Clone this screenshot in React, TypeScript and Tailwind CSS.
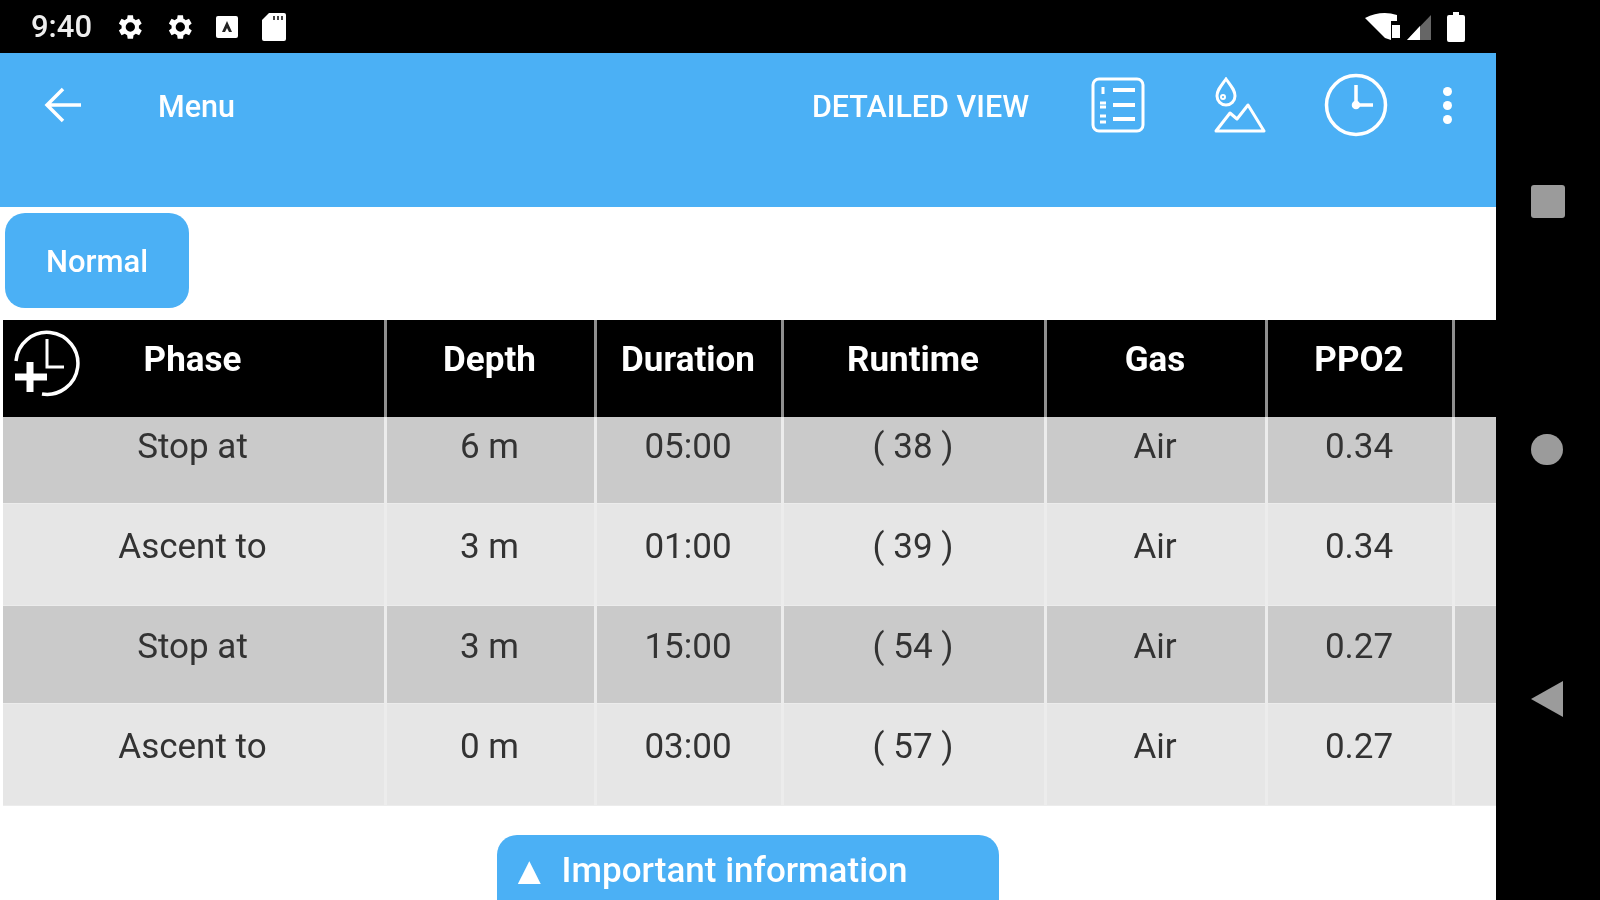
import React from "react";

const columns = [
  { label: "Phase", w: "w-[384px]" },
  { label: "Depth", w: "w-[210px]" },
  { label: "Duration", w: "w-[187px]" },
  { label: "Runtime", w: "w-[263px]" },
  { label: "Gas", w: "w-[221px]" },
  { label: "PPO2", w: "w-[187px]" },
];

const rows = [
  { cells: ["Stop at", "6 m", "05:00", "( 38 )", "Air", "0.34"], bg: "bg-[#cacaca]", h: "h-[87px]", pt: "pt-[6px]" },
  { cells: ["Ascent to", "3 m", "01:00", "( 39 )", "Air", "0.34"], bg: "bg-[#e6e6e6]", h: "h-[102px]", pt: "pt-[19px]" },
  { cells: ["Stop at", "3 m", "15:00", "( 54 )", "Air", "0.27"], bg: "bg-[#cacaca]", h: "h-[98px]", pt: "pt-[17px]" },
  { cells: ["Ascent to", "0 m", "03:00", "( 57 )", "Air", "0.27"], bg: "bg-[#e6e6e6]", h: "h-[102px]", pt: "pt-[19px]" },
];

function Gear() {
  return (
    <svg width="32" height="32" viewBox="0 0 24 24" fill="#fff">
      <path d="M19.4 13a7.5 7.5 0 0 0 0-2l2.1-1.6-2-3.5-2.5 1a7.5 7.5 0 0 0-1.7-1L15 3.2h-4l-.4 2.7a7.5 7.5 0 0 0-1.7 1l-2.5-1-2 3.5L6.5 11a7.5 7.5 0 0 0 0 2l-2.1 1.6 2 3.5 2.5-1a7.5 7.5 0 0 0 1.7 1l.4 2.7h4l.4-2.7a7.5 7.5 0 0 0 1.7-1l2.5 1 2-3.5zM13 15.5a3.5 3.5 0 1 1 0-7 3.5 3.5 0 0 1 0 7z" />
    </svg>
  );
}

function StatusBar() {
  return (
    <div className="h-[53px] shrink-0 bg-black flex items-center pl-[31px] pr-[31px] text-white">
      <span className="text-[31px] font-medium w-[82px] text-[#eeeeee] mt-[2px]">9:40</span>
      <div className="flex items-center gap-[18px]">
        <Gear />
        <Gear />
        <svg width="22" height="24" viewBox="0 0 22 24" className="ml-[3px]">
          <rect x="0" y="1" width="22" height="22" rx="2" fill="#fff" />
          <path d="M11 6l5 11h-3l-2-4-2 4H6z" fill="#222" />
        </svg>
        <svg width="24" height="28" viewBox="0 0 24 28" fill="#fff" className="ml-[6px]">
          <path d="M7 0h15a2 2 0 0 1 2 2v24a2 2 0 0 1-2 2H2a2 2 0 0 1-2-2V7z" />
          <path d="M11 3h2v4h-2zM15 3h2v4h-2zM19 3h2v4h-2z" fill="#444" />
        </svg>
      </div>
      <div className="ml-auto flex items-center">
        <svg width="66" height="30" viewBox="0 0 66 30">
          <path d="M0 6 Q16 -2 32 3 L32 9 L26 9 L26 28 L20 26 Z" fill="#fff" />
          <rect x="27" y="13" width="8" height="13" fill="#fff" />
          <path d="M42 28 L66 3 V28 Z" fill="#666" />
          <path d="M42 28 L55 14 V28 Z" fill="#fff" />
        </svg>
        <svg width="18" height="30" viewBox="0 0 18 30" className="ml-[16px]">
          <path d="M6 0h6v3h4a2 2 0 0 1 2 2v23a2 2 0 0 1-2 2H2a2 2 0 0 1-2-2V5a2 2 0 0 1 2-2h4z" fill="#fff" />
        </svg>
      </div>
    </div>
  );
}

function ListIcon() {
  return (
    <svg width="54" height="56" viewBox="0 0 54 56" fill="none" stroke="#fff" strokeWidth="3">
      <rect x="2" y="2" width="50" height="52" rx="6" />
      <path d="M22 13h22M22 28h22M22 42h22" strokeWidth="4" />
      <path d="M12 10v7M9 26h6M9 30h6M9 39h6M9 45h6" strokeWidth="3" />
    </svg>
  );
}

function DropMountainIcon() {
  return (
    <svg width="52" height="56" viewBox="0 0 52 56" fill="none" stroke="#fff" strokeWidth="3">
      <path d="M12 2c5 7 9 11 9 17a9 9 0 0 1-18 0c0-6 4-10 9-17z" />
      <circle cx="9" cy="20" r="2" strokeWidth="2" />
      <path d="M2 54l14-18 7 6 11-14 16 26z" strokeLinejoin="round" />
    </svg>
  );
}

function ClockIcon({ size }: { size: number }) {
  return (
    <svg width={size} height={size} viewBox="0 0 64 64" fill="none" stroke="#fff" strokeWidth="3.5">
      <circle cx="32" cy="32" r="29.5" />
      <path d="M32 12v20h17" />
      <circle cx="32" cy="32" r="2.5" fill="#fff" />
    </svg>
  );
}

function Toolbar() {
  return (
    <div className="h-[154px] shrink-0 bg-[#4bb0f5] flex items-start text-white">
      <div className="h-[104px] w-full flex items-center">
        <svg width="38" height="36" viewBox="0 0 38 36" fill="none" stroke="#fff" strokeWidth="3.5" className="ml-[44px]">
          <path d="M37 18H3M19 2L3 18l16 16" />
        </svg>
        <span className="ml-[76px] text-[30.5px] font-medium mt-[4px]">Menu</span>
        <span className="ml-auto text-[30.5px] font-medium mt-[4px]">DETAILED VIEW</span>
        <div className="ml-[62px]"><ListIcon /></div>
        <div className="ml-[69px]"><DropMountainIcon /></div>
        <div className="ml-[58px]"><ClockIcon size={64} /></div>
        <div className="ml-[55px] mr-[44px] flex flex-col gap-[5px]">
          <span className="w-[9px] h-[9px] rounded-full bg-white" />
          <span className="w-[9px] h-[9px] rounded-full bg-white" />
          <span className="w-[9px] h-[9px] rounded-full bg-white" />
        </div>
      </div>
    </div>
  );
}

function AddClockIcon() {
  return (
    <svg width="68" height="68" viewBox="0 0 68 68" fill="none" stroke="#fff" strokeWidth="3.5">
      <path d="M3 32a31 31 0 1 1 26 33" />
      <path d="M34 10v28h17" strokeWidth="3" />
      <path d="M17 33v30M2 48h32" strokeWidth="7" />
    </svg>
  );
}

function PlanTable() {
  return (
    <div className="shrink-0 pl-[3px]">
      <div className="flex h-[97px] bg-black text-white">
        {columns.map((col, i) => (
          <div
            key={col.label}
            className={`relative ${col.w} shrink-0 border-r-[3px] border-[#8f8f8f] pr-[2px] text-center text-[35px] font-bold pt-[16px] leading-[48px]`}
          >
            {i === 0 && (
              <div className="absolute left-[10px] top-[9px]">
                <AddClockIcon />
              </div>
            )}
            {col.label}
          </div>
        ))}
      </div>
      {rows.map((row, r) => (
        <div key={r} className={`flex ${row.h} ${row.bg} text-[#333333] border-b-[1px] border-[#ececec]`}>
          {row.cells.map((cell, i) => (
            <div
              key={i}
              className={`${columns[i].w} shrink-0 border-r-[3px] border-[#ececec] pr-[2px] text-center text-[35px] leading-[48px] ${row.pt}`}
            >
              {cell}
            </div>
          ))}
        </div>
      ))}
    </div>
  );
}

function NavBar() {
  return (
    <div className="flex-1 bg-black flex flex-col items-center pt-[185px]">
      <div className="w-[34px] h-[33px] rounded-[3px] bg-[#9b9b9b]" />
      <div className="w-[32px] h-[31px] rounded-full bg-[#9b9b9b] mt-[216px] -ml-[2px]" />
      <svg width="34" height="38" viewBox="0 0 34 38" className="mt-[215px] -ml-[2px]">
        <path d="M1 19L33 1v36z" fill="#9b9b9b" />
      </svg>
    </div>
  );
}

export default function App() {
  return (
    <div className="w-[1600px] h-[900px] overflow-hidden flex bg-black font-['Roboto',sans-serif] blur-[0.7px]">
      <div className="w-[1496px] shrink-0 flex flex-col bg-white">
        <StatusBar />
        <Toolbar />
        <div className="h-[113px] shrink-0 pl-[5px] pt-[6px]">
          <button className="w-[184px] h-[95px] rounded-[20px] bg-[#4bb0f5] text-white text-[31px] font-medium pt-[4px]">
            Normal
          </button>
        </div>
        <PlanTable />
        <div className="shrink-0 flex justify-center pt-[29px]">
          <div className="w-[502px] h-[70px] rounded-t-[20px] bg-[#4bb0f5] text-white flex items-start pl-[13px] pt-[12px] gap-[13px]">
            <span className="text-[39px] leading-[48px]">▲</span>
            <span className="text-[35px] font-medium leading-[48px]">Important information</span>
          </div>
        </div>
      </div>
      <NavBar />
    </div>
  );
}
